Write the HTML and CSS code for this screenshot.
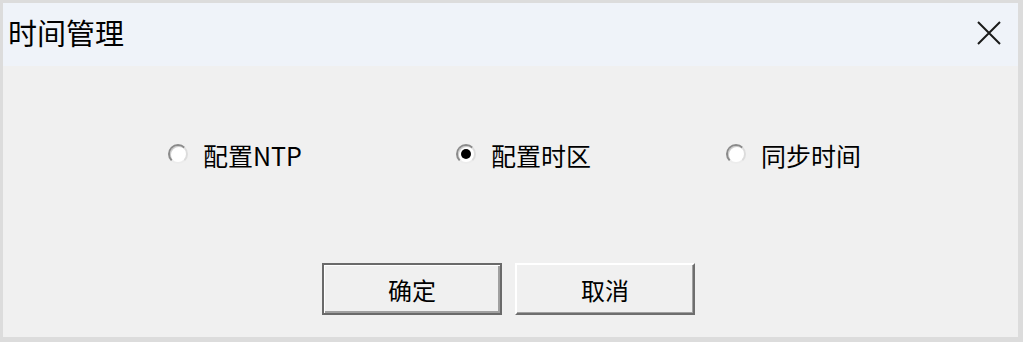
FILE: index.html
```html
<!DOCTYPE html>
<html lang="zh">
<head>
<meta charset="utf-8">
<title>时间管理</title>
<link rel="stylesheet" href="styles.css">
</head>
<body>
<div class="dialog">
  <div class="titlebar">
    <span class="title">时间管理</span>
    <span class="close">
      <svg width="26" height="26" viewBox="0 0 26 26"><path d="M2 2 L24 24 M24 2 L2 24" stroke="#1a1a1a" stroke-width="2" fill="none"/></svg>
    </span>
  </div>
  <div class="content">
    <div class="radios">
      <label class="radio">
        <span class="rb"></span>
        <span>配置NTP</span>
      </label>
      <label class="radio">
        <span class="rb checked"></span>
        <span>配置时区</span>
      </label>
      <label class="radio">
        <span class="rb"></span>
        <span>同步时间</span>
      </label>
    </div>
    <div class="buttons">
      <button class="btn default">确定</button>
      <button class="btn">取消</button>
    </div>
  </div>
</div>
</body>
</html>
```
FILE: styles.css
```css
* { box-sizing: border-box; }
html, body {
  margin: 0;
  padding: 0;
  background: #dcdcdc;
}
body {
  font-family: "Noto Sans CJK SC", "Noto Sans", sans-serif;
  color: #000;
}
.dialog {
  width: 1023px;
  height: 342px;
  border-top: 3px solid #dcdcdc;
  border-left: 3px solid #dcdcdc;
  border-right: 5px solid #dcdcdc;
  border-bottom: 5px solid #dcdcdc;
  display: flex;
  flex-direction: column;
  background: #f0f0f0;
}
.titlebar {
  height: 63px;
  background: #eff3f9;
  display: flex;
  align-items: center;
  justify-content: space-between;
  padding: 0 16px 0 5px;
}
.title {
  font-size: 29px;
  line-height: 1;
  margin-top: -4px;
}
.close {
  display: flex;
  margin-top: -4px;
}
.content {
  flex: 1;
  display: flex;
  flex-direction: column;
  background: #f0f0f0;
}
.radios {
  display: grid;
  grid-template-columns: 288px 270px auto;
  padding-left: 165px;
  margin-top: 74px;
  height: 30px;
  align-items: center;
}
.radio {
  display: flex;
  align-items: center;
  gap: 15px;
  font-size: 25px;
  line-height: 30px;
}
.rb {
  display: block;
  flex: none;
  width: 20px;
  height: 20px;
  margin-top: -3px;
  border-radius: 50%;
  background: #ffffff;
  border: 2px solid;
  border-color: #8a8a8a #dcdcdc #ececec #8a8a8a;
  box-shadow: inset 1px 1px 0 #cfcfcf;
  position: relative;
}
.rb.checked::after {
  content: "";
  position: absolute;
  left: 3px;
  top: 3px;
  width: 10px;
  height: 10px;
  border-radius: 50%;
  background: #000;
}
.buttons {
  display: flex;
  gap: 13px;
  padding-left: 319px;
  margin-top: 93px;
}
.btn {
  width: 180px;
  height: 52px;
  font-family: "Noto Sans CJK SC", sans-serif;
  font-size: 24px;
  color: #000;
  background: #f0f0f0;
  padding: 0;
  border-top: 2px solid #ffffff;
  border-left: 2px solid #ffffff;
  border-right: 2px solid #6e6e6e;
  border-bottom: 2px solid #6e6e6e;
  box-shadow: inset -1px -1px 0 #a0a0a0;
}
.btn.default {
  border: 2px solid #6a6a6a;
  box-shadow: inset 1px 1px 0 #ffffff, inset -2px -2px 0 #a0a0a0;
}
```
